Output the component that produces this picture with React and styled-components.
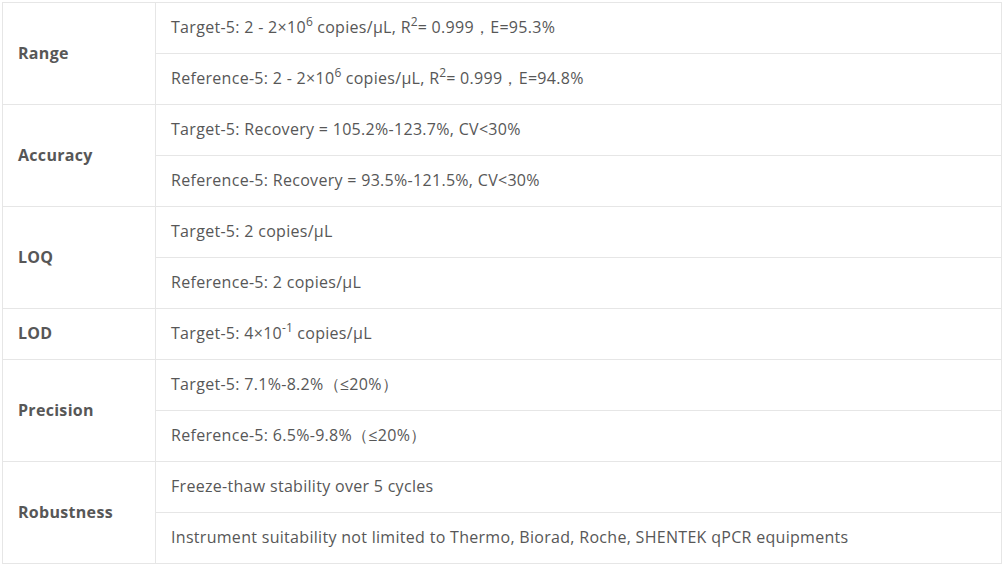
import React from 'react';
import styled, { createGlobalStyle } from 'styled-components';

const GlobalStyle = createGlobalStyle`
  html, body {
    margin: 0;
    padding: 0;
    background: #fff;
  }
  body {
    font-family: "Open Sans", "Liberation Sans", sans-serif;
  }
`;

const Page = styled.div`
  padding: 2px;
`;

const SpecTable = styled.table`
  width: 1000px;
  border-collapse: collapse;
  table-layout: fixed;
  color: #575757;
  font-size: 16px;
  line-height: 22px;
  letter-spacing: 0.3px;
`;

const Label = styled.th`
  box-sizing: border-box;
  width: 153px;
  padding: 0 15px 2px;
  border: 1px solid #e6e6e6;
  text-align: left;
  font-weight: 700;
  vertical-align: middle;
`;

const Cell = styled.td`
  height: 48px;
  padding: 0 15px 2px;
  border: 1px solid #e6e6e6;
  vertical-align: middle;
  white-space: nowrap;
`;

const Sup = styled.sup`
  font-size: 12px;
  line-height: 0;
  letter-spacing: 0;
  vertical-align: 0.6em;
`;

const rows = [
  {
    label: 'Range',
    items: [
      <>Target-5: 2 - 2×10<Sup>6</Sup> copies/μL, R<Sup>2</Sup>= 0.999，E=95.3%</>,
      <>Reference-5: 2 - 2×10<Sup>6</Sup> copies/μL, R<Sup>2</Sup>= 0.999，E=94.8%</>,
    ],
  },
  {
    label: 'Accuracy',
    items: [
      'Target-5: Recovery = 105.2%-123.7%, CV<30%',
      'Reference-5: Recovery = 93.5%-121.5%, CV<30%',
    ],
  },
  {
    label: 'LOQ',
    items: ['Target-5: 2 copies/μL', 'Reference-5: 2 copies/μL'],
  },
  {
    label: 'LOD',
    items: [<>Target-5: 4×10<Sup>-1</Sup> copies/μL</>],
  },
  {
    label: 'Precision',
    items: ['Target-5: 7.1%-8.2%（≤20%）', 'Reference-5: 6.5%-9.8%（≤20%）'],
  },
  {
    label: 'Robustness',
    items: [
      'Freeze-thaw stability over 5 cycles',
      'Instrument suitability not limited to Thermo, Biorad, Roche, SHENTEK qPCR equipments',
    ],
  },
];

export default function App() {
  return (
    <Page>
      <GlobalStyle />
      <SpecTable>
        <tbody>
          {rows.map((row) =>
            row.items.map((item, i) => (
              <tr key={row.label + i}>
                {i === 0 && <Label rowSpan={row.items.length}>{row.label}</Label>}
                <Cell>{item}</Cell>
              </tr>
            ))
          )}
        </tbody>
      </SpecTable>
    </Page>
  );
}
